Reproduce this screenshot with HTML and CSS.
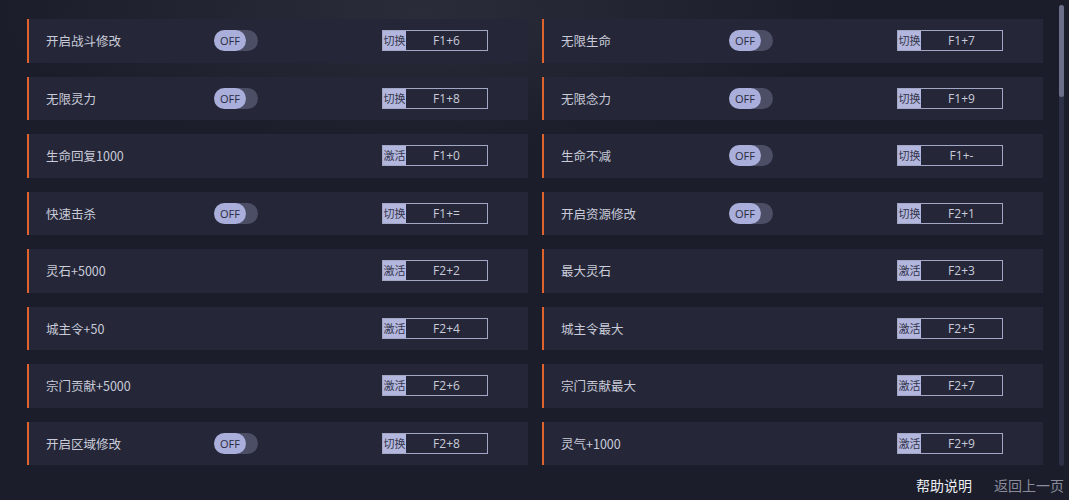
FILE: index.html
```html
<!DOCTYPE html>
<html>
<head>
    <title>修改器</title>
    <link rel="stylesheet" href="styles.css">
</head>
<body>
    <div class="page">
        <div class="list">
            <div class="item"><span class="name">开启战斗修改</span><span class="switch"><span class="knob">OFF</span></span><span class="key"><b>切换</b><i>F1+6</i></span></div>
            <div class="item"><span class="name">无限生命</span><span class="switch"><span class="knob">OFF</span></span><span class="key"><b>切换</b><i>F1+7</i></span></div>
            <div class="item"><span class="name">无限灵力</span><span class="switch"><span class="knob">OFF</span></span><span class="key"><b>切换</b><i>F1+8</i></span></div>
            <div class="item"><span class="name">无限念力</span><span class="switch"><span class="knob">OFF</span></span><span class="key"><b>切换</b><i>F1+9</i></span></div>
            <div class="item"><span class="name">生命回复1000</span><span class="key"><b>激活</b><i>F1+0</i></span></div>
            <div class="item"><span class="name">生命不减</span><span class="switch"><span class="knob">OFF</span></span><span class="key"><b>切换</b><i>F1+-</i></span></div>
            <div class="item"><span class="name">快速击杀</span><span class="switch"><span class="knob">OFF</span></span><span class="key"><b>切换</b><i>F1+=</i></span></div>
            <div class="item"><span class="name">开启资源修改</span><span class="switch"><span class="knob">OFF</span></span><span class="key"><b>切换</b><i>F2+1</i></span></div>
            <div class="item"><span class="name">灵石+5000</span><span class="key"><b>激活</b><i>F2+2</i></span></div>
            <div class="item"><span class="name">最大灵石</span><span class="key"><b>激活</b><i>F2+3</i></span></div>
            <div class="item"><span class="name">城主令+50</span><span class="key"><b>激活</b><i>F2+4</i></span></div>
            <div class="item"><span class="name">城主令最大</span><span class="key"><b>激活</b><i>F2+5</i></span></div>
            <div class="item"><span class="name">宗门贡献+5000</span><span class="key"><b>激活</b><i>F2+6</i></span></div>
            <div class="item"><span class="name">宗门贡献最大</span><span class="key"><b>激活</b><i>F2+7</i></span></div>
            <div class="item"><span class="name">开启区域修改</span><span class="switch"><span class="knob">OFF</span></span><span class="key"><b>切换</b><i>F2+8</i></span></div>
            <div class="item"><span class="name">灵气+1000</span><span class="key"><b>激活</b><i>F2+9</i></span></div>
        </div>
        <div class="scrollbar"><div class="thumb"></div></div>
        <div class="footer">
            <a class="help">帮助说明</a>
            <a class="back">返回上一页</a>
        </div>
    </div>
</body>
</html>
```

FILE: styles.css
```css
html, body {
    margin: 0;
    padding: 0;
}

body {
    width: 1069px;
    height: 500px;
    overflow: hidden;
    font-family: "Noto Sans CJK SC", "Noto Sans", sans-serif;
    background-color: #1b1d2a;
    background-image: radial-gradient(ellipse 420px 140px at 420px 10px, rgba(70, 72, 84, 0.35), rgba(70, 72, 84, 0));
}

.page {
    position: relative;
    height: 500px;
}

.list {
    display: grid;
    grid-template-columns: 501px 501px;
    column-gap: 14px;
    row-gap: 14px;
    padding: 19px 0 0 27px;
}

.item {
    display: flex;
    align-items: center;
    height: 43.5px;
    background-color: #252738;
    border-left: 2px solid #e0622c;
    padding-right: 40px;
    box-sizing: border-box;
}

.name {
    width: 168px;
    padding-left: 17px;
    font-size: 12.5px;
    color: #c9cbd9;
    flex-shrink: 0;
}

/* toggle switch, off state */
.switch {
    width: 44px;
    height: 21px;
    border-radius: 11px;
    background-color: #4b4e65;
    display: flex;
    align-items: center;
}

.knob {
    width: 32px;
    height: 21px;
    border-radius: 11px;
    background-color: #a9aedb;
    color: #2a2c40;
    font-size: 11px;
    font-family: "Open Sans", sans-serif;
    text-align: center;
    line-height: 21px;
}

.key {
    margin-left: auto;
    display: flex;
    width: 106px;
    height: 21px;
    box-sizing: border-box;
    border: 1px solid #a3a7c6;
}

.key b {
    font-weight: normal;
    width: 23px;
    background-color: #b3b7dd;
    color: #34364c;
    font-size: 11px;
    line-height: 19px;
    text-align: center;
}

.key i {
    font-style: normal;
    flex: 1;
    text-align: center;
    color: #c9cbd9;
    font-size: 12px;
    font-family: "Open Sans", sans-serif;
    line-height: 19px;
}

/* scrollbar on the right edge */
.scrollbar {
    position: absolute;
    left: 1059px;
    top: 5px;
    width: 5px;
    height: 461px;
    border-radius: 3px;
    background-color: #2e3146;
}

.thumb {
    height: 92px;
    border-radius: 3px;
    background-color: #6b6f8a;
}

.footer {
    position: absolute;
    right: 5px;
    bottom: 5px;
    display: flex;
    gap: 22px;
    font-size: 14px;
}

.help {
    color: #eceef4;
}

.back {
    color: #8a8c9c;
}
```
